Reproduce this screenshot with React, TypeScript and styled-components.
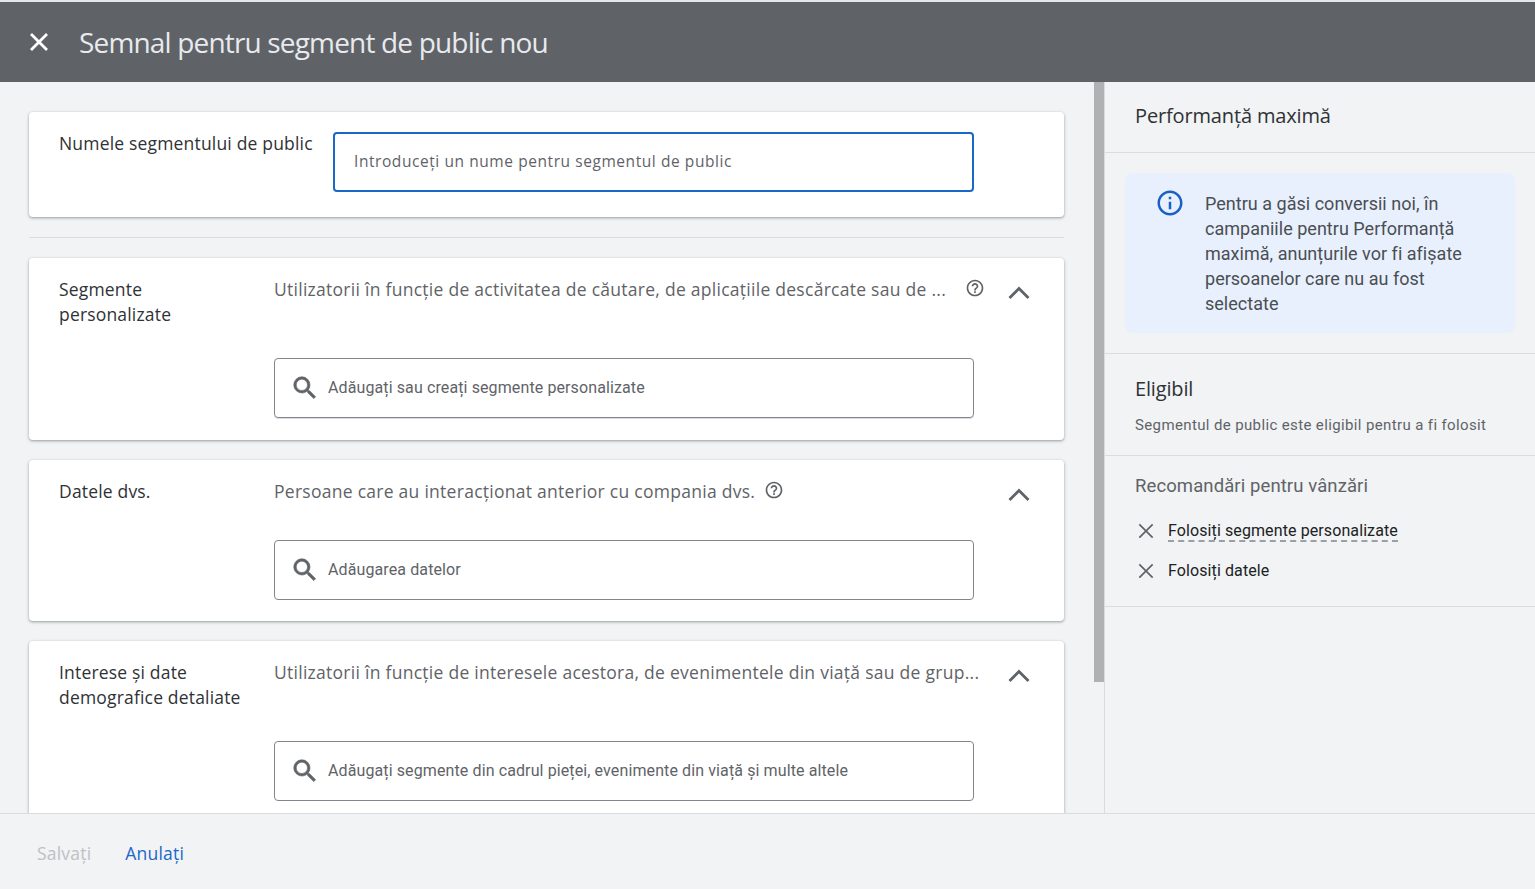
import React from "react";
import styled, { createGlobalStyle } from "styled-components";

const Global = createGlobalStyle`
  html, body { margin: 0; padding: 0; height: 100%; overflow: hidden; }
  * { box-sizing: border-box; }
  body { font-family: Roboto, "Liberation Sans", sans-serif; background: #f1f3f4; }
`;

const display = `"Open Sans", Roboto, sans-serif`;

const Page = styled.div`
  height: 889px;
  display: flex;
  flex-direction: column;
  overflow: hidden;
`;
const Header = styled.header`
  height: 82px;
  flex: none;
  background: #5f6368;
  border-top: 2px solid #e6e7e8;
  display: flex;
  align-items: center;
  padding-left: 27px;
  gap: 28px;
  color: #e8eaed;
`;
const CloseBtn = styled.span`
  width: 24px;
  height: 24px;
  display: flex;
  color: #fff;
`;
const Title = styled.h1`
  margin: 0;
  font: 400 28px/34px ${display};
  letter-spacing: -0.83px;
  color: #e8eaed;
`;
const Body = styled.div`
  flex: 1;
  min-height: 0;
  display: flex;
`;
const Main = styled.main`
  width: 1094px;
  flex: none;
  overflow: hidden;
  padding: 30px 30px 0 29px;
  display: flex;
  flex-direction: column;
  gap: 20px;
`;
const Scroll = styled.div`
  width: 10px;
  flex: none;
`;
const Thumb = styled.div`
  height: 600px;
  background: #b0b1b3;
`;
const Card = styled.section<{ $h: number }>`
  flex: none;
  height: ${(p) => p.$h}px;
  background: #fff;
  border-radius: 4px;
  box-shadow: 0 1px 2px rgba(60, 64, 67, 0.3), 0 1px 3px 1px rgba(60, 64, 67, 0.15);
  padding: 20px 30px 0;
`;
const NameRow = styled.div`
  display: flex;
  gap: 19px;
`;
const Label = styled.div<{ $w: number }>`
  margin-top: -1px;
  font: 500 17.5px/25px ${display};
  letter-spacing: 0.18px;
  color: #2f3235;
  white-space: nowrap;
  width: ${(p) => p.$w}px;
  flex: none;
`;
const NameInput = styled.div`
  width: 641px;
  height: 60px;
  border: 2px solid #1a67c9;
  border-radius: 4px;
  display: flex;
  align-items: center;
  padding: 0 0 2px 19px;
  font: 500 15.5px/20px ${display};
  color: #5f6368;
  letter-spacing: 0.57px;
`;
const Divider = styled.hr`
  flex: none;
  width: 100%;
  margin: 0;
  border: 0;
  border-top: 1px solid #dadce0;
`;
const HeadRow = styled.div<{ $h: number }>`
  display: flex;
  align-items: flex-start;
  height: ${(p) => p.$h}px;
`;
const Desc = styled.div`
  margin-top: -1px;
  font: 500 17.5px/25px ${display};
  letter-spacing: 0.27px;
  color: #5f6368;
  white-space: nowrap;
  flex: none;
`;
const Help = styled.span<{ $gap: number }>`
  width: 20px;
  height: 20px;
  margin-left: ${(p) => p.$gap}px;
  flex: none;
  display: flex;
  color: #5f6368;
`;
const Chevron = styled.span`
  width: 30px;
  height: 30px;
  flex: none;
  margin-top: -1px;
  margin-left: auto;
  display: flex;
  color: #5f6368;
`;
const SearchField = styled.div<{ $under?: boolean }>`
  width: 700px;
  height: 60px;
  margin-left: 215px;
  border: 1px solid #80868b;
  border-radius: 4px;
  display: flex;
  align-items: center;
  padding-left: 15px;
  gap: 8px;
  font: 400 16px/24px Roboto, sans-serif;
  letter-spacing: 0.11px;
  color: #5f6368;
  box-shadow: ${(p) => (p.$under ? "0 1px 0 #dadce0" : "none")};
`;
const Side = styled.aside`
  flex: 1;
  border-left: 1px solid #dadce0;
  background: #f1f3f4;
  display: flex;
  flex-direction: column;
`;
const SideSection = styled.div<{ $h: number }>`
  flex: none;
  height: ${(p) => p.$h}px;
  border-bottom: 1px solid #dadce0;
  padding-left: 30px;
`;
const SideTitle = styled.h2<{ $top: number }>`
  margin: 0;
  padding-top: ${(p) => p.$top}px;
  font: 500 20px/26px ${display};
  letter-spacing: -0.15px;
  color: #2f3235;
`;
const InfoSection = styled.div`
  flex: none;
  height: 201px;
  padding: 20px 20px 0;
  border-bottom: 1px solid #dadce0;
`;
const InfoBox = styled.div`
  height: 160px;
  background: #e8f0fe;
  border-radius: 8px;
  display: flex;
  padding: 18px 20px 0 30px;
  gap: 20px;
`;
const InfoIcon = styled.span`
  width: 30px;
  height: 30px;
  margin-top: -3px;
  flex: none;
  color: #1a5fc4;
  display: flex;
`;
const InfoText = styled.p`
  margin: 0;
  font: 400 18px/25px Roboto, sans-serif;
  letter-spacing: 0.02px;
  color: #4a4e52;
`;
const SubText = styled.div`
  margin-top: 13px;
  font: 400 15px/20px Roboto, sans-serif;
  letter-spacing: 0.37px;
  color: #5f6368;
`;
const RecTitle = styled.div`
  padding-top: 17px;
  font: 400 18.5px/26px Roboto, sans-serif;
  letter-spacing: 0.1px;
  color: #5f6368;
`;
const RecList = styled.div`
  margin-top: 20px;
  display: flex;
  flex-direction: column;
  gap: 16px;
`;
const RecItem = styled.div`
  display: flex;
  align-items: center;
  height: 24px;
  gap: 12px;
  margin-left: 1px;
`;
const RecIcon = styled.span`
  width: 20px;
  height: 20px;
  flex: none;
  display: flex;
  color: #5f6368;
`;
const RecText = styled.span<{ $dashed?: boolean }>`
  padding-top: 1px;
  font: 400 16px/19px Roboto, sans-serif;
  letter-spacing: 0.1px;
  color: #202124;
  border-bottom: ${(p) => (p.$dashed ? "2px dashed #9aa0a6" : "2px solid transparent")};
`;
const Footer = styled.footer`
  height: 76px;
  flex: none;
  border-top: 1px solid #dadce0;
  background: #f1f3f4;
  display: flex;
  align-items: center;
  padding: 2px 0 0 37px;
  gap: 34px;
  position: relative;
  z-index: 1;
`;
const FootBtn = styled.span<{ $on?: boolean }>`
  font: 500 17.5px/24px ${display};
  letter-spacing: 0.2px;
  color: ${(p) => (p.$on ? "#1a67c9" : "#bdc1c6")};
`;

const X = ({ w = 2.8 }: { w?: number }) => (
  <svg viewBox="0 0 24 24" width="100%" height="100%" fill="none" stroke="currentColor" strokeWidth={w}>
    <path d="M4 4l16 16M20 4L4 20" />
  </svg>
);
const SearchIcon = () => (
  <svg viewBox="0 0 24 24" width="30" height="30" fill="#5f6368" stroke="#5f6368" strokeWidth="0.5" style={{ flex: "none" }}>
    <path d="M15.5 14h-.79l-.28-.27A6.47 6.47 0 0 0 16 9.5 6.5 6.5 0 1 0 9.5 16c1.61 0 3.09-.59 4.23-1.57l.27.28v.79l5 4.99L20.49 19l-4.99-5zm-6 0C7.01 14 5 11.99 5 9.5S7.01 5 9.5 5 14 7.01 14 9.5 11.99 14 9.5 14z" />
  </svg>
);
const HelpIcon = () => (
  <svg viewBox="0 0 24 24" width="100%" height="100%" fill="currentColor">
    <path d="M11 18h2v-2h-2v2zm1-16C6.48 2 2 6.48 2 12s4.48 10 10 10 10-4.48 10-10S17.52 2 12 2zm0 18c-4.41 0-8-3.59-8-8s3.59-8 8-8 8 3.59 8 8-3.59 8-8 8zm0-14c-2.21 0-4 1.79-4 4h2c0-1.1.9-2 2-2s2 .9 2 2c0 2-3 1.75-3 5h2c0-2.25 3-2.5 3-5 0-2.21-1.79-4-4-4z" />
  </svg>
);
const ChevronUp = () => (
  <svg viewBox="0 0 30 30" width="100%" height="100%" fill="none" stroke="currentColor" strokeWidth="2.8">
    <path d="M5.5 21L15 11.5 24.5 21" />
  </svg>
);
const InfoGlyph = () => (
  <svg viewBox="0 0 24 24" width="100%" height="100%" fill="currentColor">
    <path d="M11 7h2v2h-2zm0 4h2v6h-2zm1-9C6.48 2 2 6.48 2 12s4.48 10 10 10 10-4.48 10-10S17.52 2 12 2zm0 18c-4.41 0-8-3.59-8-8s3.59-8 8-8 8 3.59 8 8-3.59 8-8 8z" />
  </svg>
);

const Search = ({ text, under }: { text: string; under?: boolean }) => (
  <SearchField $under={under}>
    <SearchIcon />
    <span>{text}</span>
  </SearchField>
);

export default function App() {
  return (
    <Page>
      <Global />
      <Header>
        <CloseBtn>
          <X />
        </CloseBtn>
        <Title>Semnal pentru segment de public nou</Title>
      </Header>
      <Body>
        <Main>
          <Card $h={105}>
            <NameRow>
              <Label $w={255}>Numele segmentului de public</Label>
              <NameInput>Introduceți un nume pentru segmentul de public</NameInput>
            </NameRow>
          </Card>
          <Divider />
          <Card $h={182}>
            <HeadRow $h={80}>
              <Label $w={215}>
                Segmente
                <br />
                personalizate
              </Label>
              <Desc>Utilizatorii în funcție de activitatea de căutare, de aplicațiile descărcate sau de ...</Desc>
              <Help $gap={19}>
                <HelpIcon />
              </Help>
              <Chevron>
                <ChevronUp />
              </Chevron>
            </HeadRow>
            <Search under text="Adăugați sau creați segmente personalizate" />
          </Card>
          <Card $h={161}>
            <HeadRow $h={60}>
              <Label $w={215}>Datele dvs.</Label>
              <Desc>Persoane care au interacționat anterior cu compania dvs.</Desc>
              <Help $gap={9}>
                <HelpIcon />
              </Help>
              <Chevron>
                <ChevronUp />
              </Chevron>
            </HeadRow>
            <Search text="Adăugarea datelor" />
          </Card>
          <Card $h={200}>
            <HeadRow $h={80}>
              <Label $w={215}>
                Interese și date
                <br />
                demografice detaliate
              </Label>
              <Desc>Utilizatorii în funcție de interesele acestora, de evenimentele din viață sau de grup...</Desc>
              <Chevron>
                <ChevronUp />
              </Chevron>
            </HeadRow>
            <Search text="Adăugați segmente din cadrul pieței, evenimente din viață și multe altele" />
          </Card>
        </Main>
        <Scroll>
          <Thumb />
        </Scroll>
        <Side>
          <SideSection $h={71}>
            <SideTitle $top={21}>Performanță maximă</SideTitle>
          </SideSection>
          <InfoSection>
            <InfoBox>
              <InfoIcon>
                <InfoGlyph />
              </InfoIcon>
              <InfoText>
                Pentru a găsi conversii noi, în campaniile pentru Performanță maximă, anunțurile vor fi afișate persoanelor care nu au fost selectate
              </InfoText>
            </InfoBox>
          </InfoSection>
          <SideSection $h={102}>
            <SideTitle $top={22}>Eligibil</SideTitle>
            <SubText>Segmentul de public este eligibil pentru a fi folosit</SubText>
          </SideSection>
          <SideSection $h={151}>
            <RecTitle>Recomandări pentru vânzări</RecTitle>
            <RecList>
              <RecItem>
                <RecIcon>
                  <X w={2} />
                </RecIcon>
                <RecText $dashed>Folosiți segmente personalizate</RecText>
              </RecItem>
              <RecItem>
                <RecIcon>
                  <X w={2} />
                </RecIcon>
                <RecText>Folosiți datele</RecText>
              </RecItem>
            </RecList>
          </SideSection>
        </Side>
      </Body>
      <Footer>
        <FootBtn>Salvați</FootBtn>
        <FootBtn $on>Anulați</FootBtn>
      </Footer>
    </Page>
  );
}
